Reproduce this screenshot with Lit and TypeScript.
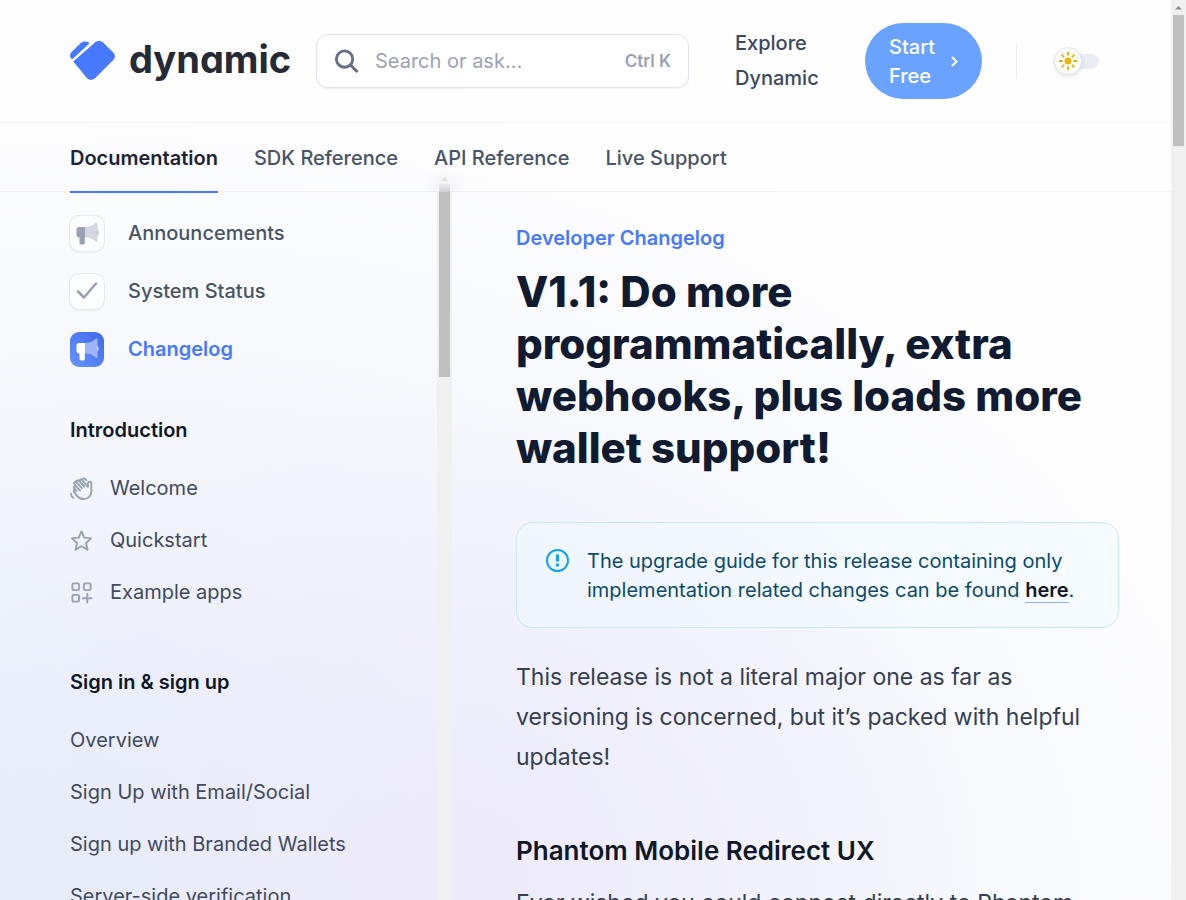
import { LitElement, html, svg, css } from "lit";
import { customElement } from "lit/decorators.js";
import { classMap } from "lit/directives/class-map.js";

const horn = svg`
  <path class="horn-back" d="M21.6 8.6c1.2.5 1.9 1.700 1.900 2.900s-.7 2.400-1.900 2.900z"/>
  <path class="horn-back" d="M4 6h6v10.500h-.2v5.500a1.500 1.500 0 0 1-1.500 1.500h-2.300a1.500 1.500 0 0 1-1.500-1.500v-5.500h-.5a2.600 2.600 0 0 1-2.500-2.500v-5.500a2.500 2.500 0 0 1 2.500-2.500z"/>
  <path class="horn-front" d="M10 6c4.500 0 8-1.500 10.800-4.300.6-.6 1.700-.3 1.700.7v17.700c0 1-1.100 1.300-1.700.7-2.800-2.800-6.300-4.300-10.800-4.300z"/>`;
const check = svg`<path class="line thick" d="M3 12.500l6 6 12-14"/>`;
const wave = svg`
  <path class="line" d="M6.500 14.500l-2.200-2.600a1.400 1.400 0 0 1 2.200-1.800l4 4M7 10.500l-2.300-3a1.400 1.400 0 0 1 2.200-1.800l5.400 6M8 6.800l-.8-1.100a1.400 1.400 0 0 1 2.200-1.800l5.400 6M11 5.600l-.7-1a1.400 1.400 0 0 1 2.200-1.700l6.200 7.300V6.700a1.800 1.800 0 0 1 3.600 0v8.300c0 4.600-3.400 8-8 8-3 0-5.200-1.200-7-3.400l-3-3.800a1.400 1.400 0 0 1 2.200-1.900M14 1.500c1.300.1 2.200.7 3 1.800M1 17.500c.1 1.900.8 3.200 2.500 4.200"/>`;
const star = svg`<path class="line" d="M12 2.500l2.900 6.500 7.100.8-5.300 4.800 1.500 7-6.200-3.600-6.200 3.600 1.500-7L2 9.800 9.100 9z"/>`;
const apps = svg`
  <g class="line"><rect x="2.500" y="2.500" width="7" height="7" rx="1.500"/><rect x="14.500" y="2.500" width="7" height="7" rx="1.500"/>
  <rect x="2.500" y="14.500" width="7" height="7" rx="1.500"/><path d="M18 13.500v9M13.500 18h9"/></g>`;

const anchors = [
  { label: "Announcements", icon: horn, active: false },
  { label: "System Status", icon: check, active: false },
  { label: "Changelog", icon: horn, active: true },
];
const groups = [
  {
    title: "Introduction",
    items: [
      { label: "Welcome", icon: wave },
      { label: "Quickstart", icon: star },
      { label: "Example apps", icon: apps },
    ],
  },
  {
    title: "Sign in & sign up",
    items: [
      { label: "Overview", icon: null },
      { label: "Sign Up with Email/Social", icon: null },
      { label: "Sign up with Branded Wallets", icon: null },
      { label: "Server-side verification", icon: null },
    ],
  },
];
const tabs = ["Documentation", "SDK Reference", "API Reference", "Live Support"];
const rays = [0, 45, 90, 135, 180, 225, 270, 315];

@customElement("docs-header")
class DocsHeader extends LitElement {
  static styles = css`
    :host { display: block; }
    a { color: inherit; text-decoration: none; }
    button { font: inherit; border: 0; padding: 0; cursor: pointer; }
    .top {
      display: flex; align-items: center; height: 122px; padding: 0 72px 0 70px;
      border-bottom: 1px solid #f4f5f8;
    }
    .logo { display: flex; align-items: center; gap: 14px; width: 220px; flex: none; }
    .logo svg { width: 45px; height: 40px; flex: none; fill: #4779ff; }
    .word {
      font-size: 38px; line-height: 48px; font-weight: 700; color: #262a36;
      font-feature-settings: "cv11"; padding-bottom: 4px;
    }
    .search {
      display: flex; align-items: center; gap: 16px; flex: 1; min-width: 0; box-sizing: border-box;
      height: 54px; margin: 0 46px 0 26px; padding: 0 17px; background: #fff;
      border: 1px solid #e2e4ed; border-radius: 12px; box-shadow: 0 1px 2px #0000000d;
    }
    .search svg { width: 25px; height: 25px; flex: none; fill: none; stroke: #667085; stroke-width: 3; }
    .search input {
      flex: 1; min-width: 0; border: 0; outline: 0; padding: 0; background: none;
      font: 400 20px/28px Inter, sans-serif; color: #334155;
    }
    .search input::placeholder { color: #9aa3b5; opacity: 1; }
    kbd { font: 600 17px/24px Inter, sans-serif; color: #98a2b3; }
    .explore { width: 84px; line-height: 35px; font-weight: 500; color: #3b475b; }
    .cta {
      display: flex; align-items: center; gap: 14px; box-sizing: border-box; width: 117px; height: 76px;
      margin-left: 46px; padding: 0 24px; border-radius: 38px; background: #69a3ff; color: #fff;
      font-weight: 500; line-height: 29px; text-align: left;
    }
    .cta span { padding-top: 2px; }
    .cta svg { width: 7px; height: 11px; flex: none; fill: none; stroke: #fff; stroke-width: 2; }
    .rule { width: 1px; height: 35px; margin: 0 37px 0 34px; background: #e9ebf0; }
    .toggle { display: flex; align-items: center; width: 45px; height: 30px; background: none; }
    .knob {
      display: flex; box-sizing: border-box; width: 28px; height: 28px; flex: none; align-items: center; justify-content: center;
      border: 1px solid #e2e5ee; border-radius: 50%; background: #fff; box-shadow: 0 2px 4px #0000001a; z-index: 1;
    }
    .knob svg { width: 20px; height: 20px; flex: none; fill: #eab308; stroke: #eab308; stroke-width: 2; }
    .track { width: 29px; height: 15px; margin-left: -12px; border-radius: 0 8px 8px 0; background: #eaedf4; }
    .tabs { display: flex; gap: 36px; height: 68px; padding: 0 70px; border-bottom: 1px solid #f1f2f6; }
    .tab { display: block; line-height: 70px; height: 68px; font-weight: 500; color: #475467; white-space: nowrap; }
    .tab.active { font-weight: 600; color: #1e2436; border-bottom: 2px solid #4779ff; }
  `;

  render() {
    return html`
      <header class="top">
        <a class="logo" href="#" aria-label="dynamic home">
          <svg viewBox="0 0 45 40" aria-hidden="true">
            <path d="M.6 17C-.3 15 0 12.500 1.600 11L10.500 2.300C12.800 0 16.300-.2 18.800 1.600L19.600 2.200 2.300 18.300z"/>
            <path d="M3.200 20.400L24.400 2C27-.5 31-.6 33.600 1.900L43.500 11.800C45.400 13.800 45.400 16.800 43.500 18.800L25.300 37C22.900 39.400 19.200 39.300 16.900 36.900z"/>
          </svg>
          <span class="word">dynamic</span>
        </a>
        <label class="search">
          <svg viewBox="0 0 26 26" aria-hidden="true"><circle cx="11" cy="10.500" r="8.500"/><path d="M17 16.500l7.500 7.500"/></svg>
          <input type="text" placeholder="Search or ask..." aria-label="Search or ask" />
          <kbd>Ctrl K</kbd>
        </label>
        <a class="explore" href="#">Explore Dynamic</a>
        <button class="cta" type="button">
          <span>Start Free</span>
          <svg viewBox="0 0 7 11" aria-hidden="true"><path d="M1 1l4.500 4.500L1 10"/></svg>
        </button>
        <span class="rule"></span>
        <button class="toggle" type="button" aria-label="Toggle dark mode">
          <span class="knob">
            <svg viewBox="0 0 20 20" aria-hidden="true">
              <circle cx="10" cy="10" r="2.500"/>
              ${rays.map((a) => svg`<path d="M10 1v3.500" transform=${`rotate(${a} 10 10)`}/>`)}
            </svg>
          </span>
          <span class="track"></span>
        </button>
      </header>
      <nav class="tabs">
        ${tabs.map((t, i) => html`<a class=${classMap({ tab: true, active: i === 0 })} href="#">${t}</a>`)}
      </nav>
    `;
  }
}

@customElement("docs-sidebar")
class DocsSidebar extends LitElement {
  static styles = css`
    :host { display: flex; width: 382px; flex: none; margin-left: 70px; }
    a { color: inherit; text-decoration: none; }
    ul { list-style: none; margin: 0; padding: 0; }
    .list { flex: 1; min-width: 0; padding-top: 12px; color: #475467; }
    .anchor { display: flex; align-items: center; gap: 24px; height: 58px; font-weight: 500; }
    .anchor.active { color: #4779ff; font-weight: 600; }
    .tile {
      display: flex; align-items: center; justify-content: center; width: 34px; height: 35px;
      border-radius: 9px; background: #fcfdff; box-shadow: 0 0 0 1px #e8e9ef, 0 2px 2px #0000000d;
    }
    .active .tile { background: linear-gradient(45deg, #6695ff, #4068e8); box-shadow: none; }
    .tile svg { width: 24px; height: 24px; }
    .horn-back { fill: #98a2b3; }
    .horn-front { fill: #d2d7e0; }
    .active .horn-back { fill: #fff; }
    .active .horn-front { fill: #9db5f8; }
    .line { fill: none; stroke: #98a2b3; stroke-width: 2; stroke-linecap: round; stroke-linejoin: round; }
    .thick { stroke-width: 2.500; }
    .title { margin: 26px 0 6px; height: 52px; font-size: 20px; line-height: 52px; font-weight: 600; color: #101828; }
    .group + .group .title { margin-top: 38px; }
    .item { display: flex; align-items: center; gap: 17px; height: 52px; color: #3f4a5f; white-space: nowrap; }
    .item svg { width: 23px; height: 23px; flex: none; }
    .rail { width: 15px; flex: none; margin-top: -15px; background: linear-gradient(#f0f0f000 0 15px, #f0f0f0 15px); }
    .arrow { display: block; width: 7px; height: 4px; margin: 0 4px 3px; fill: #e6e6e6; }
    .fade { width: 11px; height: 8px; margin: 0 2px; background: linear-gradient(#ebebeb, #cfcfcf); box-shadow: 0 0 16px 6px #0000000d; clip-path: inset(-24px -24px 0 -24px); }
    .thumb { width: 11px; height: 185px; margin: 0 2px; background: #c0c0c0; }
  `;

  render() {
    return html`
      <div class="list">
        <ul>
          ${anchors.map((a) => html`<li><a class=${classMap({ anchor: true, active: a.active })} href="#">
            <span class="tile"><svg viewBox="0 0 24 24" aria-hidden="true">${a.icon}</svg></span>${a.label}</a></li>`)}
        </ul>
        ${groups.map((g) => html`<section class="group">
          <h5 class="title">${g.title}</h5>
          <ul>
            ${g.items.map((it) => html`<li><a class="item" href="#">
              ${it.icon ? html`<svg viewBox="0 0 24 24" aria-hidden="true">${it.icon}</svg>` : null}${it.label}</a></li>`)}
          </ul>
        </section>`)}
      </div>
      <div class="rail" aria-hidden="true">
        <svg class="arrow" viewBox="0 0 7 4"><path d="M0 4L3.500 0 7 4z"/></svg>
        <div class="fade"></div>
        <div class="thumb"></div>
      </div>
    `;
  }
}

@customElement("app-root")
class AppRoot extends LitElement {
  static styles = css`
    :host {
      display: flex; height: 100vh; overflow: hidden; font: 400 20px/29px Inter, sans-serif; color: #344054;
      background:
        radial-gradient(ellipse 560px 480px at 38% 98%, #edeafa 0%, #edeafa00 100%),
        radial-gradient(ellipse 480px 480px at 0% 105%, #e3edf9 0%, #e3edf900 100%),
        radial-gradient(ellipse 1200px 840px at 12% 100%, #eaeefb 0%, #fefefe 100%);
    }
    .page { display: flex; flex-direction: column; flex: 1; min-width: 0; }
    .body { display: flex; flex: 1; min-height: 0; }
    .content { flex: 1; min-width: 0; padding: 32px 52px 0 64px; }
    .eyebrow { margin: 0; font-weight: 600; color: #4779ff; }
    .headline { margin: 13px 0 48px; font-size: 42px; line-height: 52px; font-weight: 800; color: #101a30; }
    .note {
      display: flex; gap: 18px; padding: 24px 29px 22px; border: 1px solid #c3e8fb; border-radius: 17px;
      background: #f0f9ff80; color: #0c4a6e;
    }
    .note svg { width: 23px; height: 23px; margin-top: 2px; flex: none; fill: none; stroke: #0ea5e9; stroke-width: 2; }
    .note p { margin: 0; }
    .here { color: #101828; font-weight: 600; text-decoration: none; border-bottom: 1px solid #8fb1ff; }
    .lead { margin: 29px 0 0; font-size: 23px; line-height: 40px; }
    .sub { margin: 53px 0 12px; font-size: 26px; line-height: 41px; font-weight: 600; color: #101828; }
    .after { margin: 0; font-size: 23px; line-height: 40px; }
    .bar { width: 15px; flex: none; background: #f0f0f0; }
    .bar svg { display: block; width: 15px; height: 15px; fill: #8b8b8b; }
    .thumb { height: 131px; margin: 0 2px; background: #c0c0c0; }
  `;

  render() {
    return html`
      <div class="page">
        <docs-header></docs-header>
        <div class="body">
          <docs-sidebar></docs-sidebar>
          <main class="content">
            <p class="eyebrow">Developer Changelog</p>
            <h1 class="headline">V1.1: Do more programmatically, extra webhooks, plus loads more wallet support!</h1>
            <div class="note">
              <svg viewBox="0 0 23 23" aria-hidden="true"><circle cx="11.500" cy="11.500" r="10.500"/><path stroke-width="3" d="M11.500 5.500v7M11.500 14.500v3"/></svg>
              <p>The upgrade guide for this release containing only implementation related changes can be found <a class="here" href="#">here</a>.</p>
            </div>
            <p class="lead">This release is not a literal major one as far as versioning is concerned, but it’s packed with helpful updates!</p>
            <h2 class="sub">Phantom Mobile Redirect UX</h2>
            <p class="after">Ever wished you could connect directly to Phantom</p>
          </main>
        </div>
      </div>
      <div class="bar" aria-hidden="true">
        <svg viewBox="0 0 15 15"><path d="M4 9.500L7.500 6 11 9.500z"/></svg>
        <div class="thumb"></div>
      </div>
    `;
  }
}
